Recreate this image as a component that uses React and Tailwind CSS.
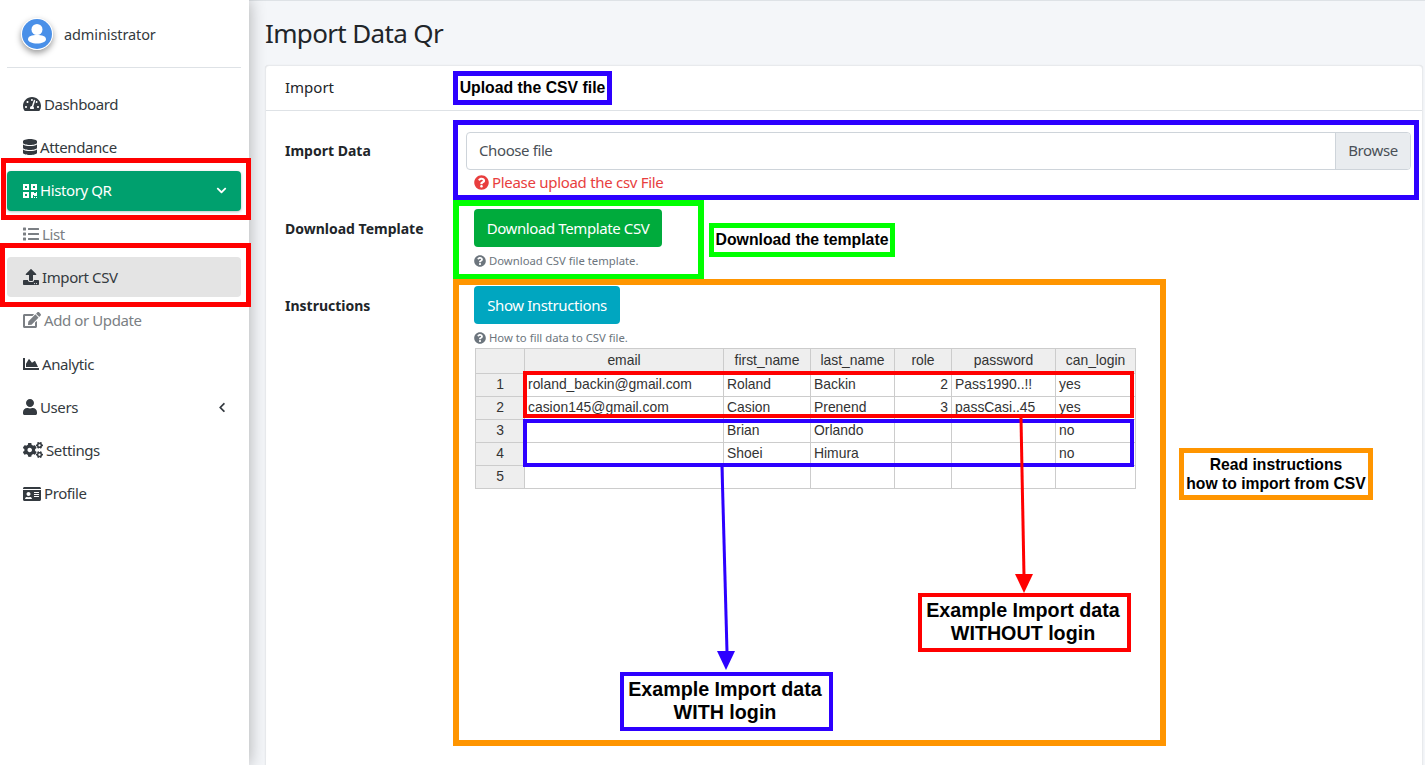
import React from "react";
import { FaTachometerAlt, FaDatabase, FaQrcode, FaList, FaUpload, FaEdit, FaChartArea, FaUser, FaCogs, FaIdCard, FaChevronDown, FaChevronLeft, FaQuestionCircle } from "react-icons/fa";

function NavItem({ icon: Icon, label, active, current, muted, right: Right, rightClass, iconWidth = 16 }) {
  const tone = active
    ? "bg-[#00a06e] text-white shadow-[0_1px_3px_rgba(0,0,0,0.25)]"
    : current
      ? "bg-[#e4e4e4] text-[#343a40]"
      : muted
        ? "text-[#7b7f84]"
        : "text-[#343a40]";
  return (
    <div className={`h-10 mb-[3.3px] ml-[7px] mr-[8px] pl-4 pr-[14px] rounded flex items-center gap-[3px] text-[15px] tracking-[-0.4px] ${tone}`}>
      <Icon style={{ width: iconWidth, height: 16 }} className="shrink-0" />
      <span>{label}</span>
      {Right && <Right className={`ml-auto ${rightClass}`} />}
    </div>
  );
}

function Box({ className, children }) {
  return <div className={`absolute box-border flex items-center justify-center text-center font-bold text-black ${className}`} style={{ fontFamily: '"Liberation Sans", Arial, sans-serif' }}>{children}</div>;
}

const columns = ["email", "first_name", "last_name", "role", "password", "can_login"];
const rows = [
  ["roland_backin@gmail.com", "Roland", "Backin", "2", "Pass1990..!!", "yes"],
  ["casion145@gmail.com", "Casion", "Prenend", "3", "passCasi..45", "yes"],
  ["", "Brian", "Orlando", "", "", "no"],
  ["", "Shoei", "Himura", "", "", "no"],
  ["", "", "", "", "", ""],
];

function Sheet() {
  return (
    <table className="table-fixed border-collapse ml-[1px] w-[660px] text-[13.9px] leading-[18px] text-[#333]" style={{ fontFamily: '"Liberation Sans", Arial, sans-serif' }}>
      <colgroup>
        <col className="w-[49px]" />
        <col className="w-[199px]" />
        <col className="w-[87px]" />
        <col className="w-[84px]" />
        <col className="w-[57px]" />
        <col className="w-[104px]" />
        <col className="w-[80px]" />
      </colgroup>
      <thead>
        <tr className="h-[25px]">
          <th className="border border-[#ccc] bg-[#eee] font-normal"></th>
          {columns.map((c) => (
            <th key={c} className="border border-[#ccc] bg-[#eee] font-normal text-center p-0 pb-[2px]">{c}</th>
          ))}
        </tr>
      </thead>
      <tbody>
        {rows.map((r, i) => (
          <tr key={i} className="h-[23px]">
            <td className="border border-[#ccc] bg-[#eee] text-center p-0 pb-[3px]">{i + 1}</td>
            {r.map((v, j) => (
              <td key={j} className={`border border-[#ccc] pt-0 pb-[3px] px-[3px] bg-white whitespace-nowrap overflow-hidden ${j === 3 ? "text-right" : "text-left"}`}>{v}</td>
            ))}
          </tr>
        ))}
      </tbody>
    </table>
  );
}

function Help({ children }) {
  return (
    <div className="h-[16px] flex items-center gap-[3px] text-[11.3px] text-[#6c757d]">
      <FaQuestionCircle className="w-[12px] h-[12px]" />
      <span>{children}</span>
    </div>
  );
}

export default function App() {
  return (
    <div className="relative w-[1425px] h-[765px] overflow-hidden flex bg-[#f4f6f9] text-[#212529]" style={{ fontFamily: '"Noto Sans", sans-serif' }}>
      {/* sidebar */}
      <aside className="w-[249px] shrink-0 bg-white shadow-[0_0_16px_rgba(0,0,0,0.3)] z-10">
        <div className="ml-[7px] mr-[8px] h-[68px] border-b border-[#dee2e6] flex items-center pl-[14px] gap-[11px]">
          <svg width="32" height="32" viewBox="0 0 32 32" className="rounded-full shadow-[0_3px_6px_rgba(0,0,0,0.4)]">
            <circle cx="16" cy="16" r="16" fill="#fff" />
            <circle cx="16" cy="16" r="15" fill="#4a90e8" />
            <circle cx="16" cy="11.5" r="5.5" fill="#fff" />
            <path d="M7 21.5c0-3.5 4-4.5 9-4.5s9 1 9 4.5c0 2-4 4-9 4s-9-2-9-4z" fill="#fff" />
          </svg>
          <span className="text-[14.5px] pt-[3px] tracking-[-0.1px] text-[#343a40]">administrator</span>
        </div>
        <nav className="pt-4">
          <NavItem icon={FaTachometerAlt} label="Dashboard" iconWidth={18} />
          <NavItem icon={FaDatabase} label="Attendance" iconWidth={14} />
          <NavItem icon={FaQrcode} label="History QR" active iconWidth={14} right={FaChevronDown} rightClass="w-[11px] h-[11px]" />
          <NavItem icon={FaList} label="List" muted iconWidth={16} />
          <NavItem icon={FaUpload} label="Import CSV" current iconWidth={16} />
          <NavItem icon={FaEdit} label="Add or Update" muted iconWidth={18} />
          <NavItem icon={FaChartArea} label="Analytic" iconWidth={16} />
          <NavItem icon={FaUser} label="Users" iconWidth={14} right={FaChevronLeft} rightClass="w-[10px] h-[11px]" />
          <NavItem icon={FaCogs} label="Settings" iconWidth={20} />
          <NavItem icon={FaIdCard} label="Profile" iconWidth={18} />
        </nav>
      </aside>

      {/* main */}
      <main className="flex-1 min-w-0 pl-4 pr-[2px] border-t border-[#dee2e6]">
        <h1 className="h-[64px] flex items-center text-[26px] tracking-[-0.65px] font-normal text-[#212529]">Import Data Qr</h1>
        <section className="bg-white rounded-t border border-[#e8eaed] h-[720px] shadow-[0_0_1px_rgba(0,0,0,0.12)]">
          <div className="h-[45px] border-b border-[#dee2e6] flex items-center pl-[19px] pb-[2px] text-[15px]">Import</div>
          <div className="pl-[19px] pr-[11px] pt-[21px]">
            <div className="flex">
              <div className="w-[181px] h-[38px] flex items-center pb-[2px] text-[14px] font-bold">Import Data</div>
              <div className="flex-1">
                <div className="h-[38px] flex border border-[#ced4da] rounded text-[15px] tracking-[-0.4px] text-[#495057] overflow-hidden">
                  <div className="flex-1 flex items-center pl-3 pb-[2px]">Choose file</div>
                  <div className="w-[75px] bg-[#e9ecef] border-l border-[#ced4da] flex items-center justify-center pb-[2px]">Browse</div>
                </div>
                <div className="mt-[1px] ml-2 flex items-center gap-[3px] h-[22px] text-[15px] tracking-[-0.3px] text-[#e83e3e]">
                  <FaQuestionCircle className="w-[15px] h-[15px]" />
                  <span>Please upload the csv File</span>
                </div>
              </div>
            </div>
            <div className="flex mt-[16px]">
              <div className="w-[181px] h-[38px] flex items-center text-[14px] font-bold">Download Template</div>
              <div className="pl-2">
                <button className="h-[38px] w-[188px] rounded bg-[#00ab3c] text-white text-[15px] tracking-[-0.4px]">Download Template CSV</button>
                <div className="mt-[6px]"><Help>Download CSV file template.</Help></div>
              </div>
            </div>
            <div className="flex mt-[17px]">
              <div className="w-[181px] h-[38px] flex items-center text-[14px] font-bold">Instructions</div>
              <div className="pl-2">
                <button className="h-[38px] w-[146px] rounded bg-[#00a6c0] text-white text-[15px] tracking-[-0.4px]">Show Instructions</button>
                <div className="mt-[6px] mb-[2px]"><Help>How to fill data to CSV file.</Help></div>
                <Sheet />
              </div>
            </div>
          </div>
        </section>
      </main>

      {/* annotations drawn over the page */}
      <div className="absolute left-[1px] top-[158px] w-[250px] h-[62px] border-[5px] border-[#ff0000] z-20" />
      <div className="absolute left-0 top-[243px] w-[251px] h-[64px] border-[5px] border-[#ff0000] z-20" />

      <Box className="left-[453px] top-[71px] w-[159px] h-[34px] border-[5px] border-[#2d00ff] text-[15.8px]">Upload the CSV file</Box>
      <div className="absolute left-[453px] top-[120px] w-[966px] h-[80px] border-[5px] border-[#2d00ff]" />
      <div className="absolute left-[453px] top-[200px] w-[251px] h-[80px] border-[6px] border-[#00ff00]" />
      <Box className="left-[709px] top-[223px] w-[186px] h-[34px] border-[5px] border-[#00ff00] text-[15.8px]">Download the template</Box>
      <div className="absolute left-[453px] top-[279px] w-[713px] h-[467px] border-[6px] border-[#ff9500]" />
      <Box className="left-[1179px] top-[448px] w-[194px] h-[52px] border-[5px] border-[#ff9500] text-[15.7px] leading-[19px]"><span>Read instructions<br />how to import from CSV</span></Box>

      <div className="absolute left-[523px] top-[371px] w-[611px] h-[47px] border-[4px] border-[#ff0000]" />
      <div className="absolute left-[523px] top-[419px] w-[611px] h-[48px] border-[4px] border-[#2d00ff]" />

      <svg className="absolute left-0 top-0 pointer-events-none" width="1425" height="765">
        <line x1="1021" y1="418" x2="1024" y2="576" stroke="#ff0000" strokeWidth="3" />
        <polygon points="1015,574 1033,574 1024,593" fill="#ff0000" />
        <line x1="722" y1="467" x2="727" y2="652" stroke="#2d00ff" strokeWidth="3" />
        <polygon points="717,651 735,651 726,670" fill="#2d00ff" />
      </svg>

      <Box className="left-[918px] top-[593px] w-[213px] h-[59px] border-[4px] border-[#ff0000] pr-[3px] pb-[2px] text-[19.7px] leading-[23px]"><span>Example Import data<br />WITHOUT login</span></Box>
      <Box className="left-[620px] top-[672px] w-[213px] h-[59px] border-[4px] border-[#2d00ff] pr-[3px] pb-[2px] text-[19.7px] leading-[23px]"><span>Example Import data<br />WITH login</span></Box>
    </div>
  );
}
